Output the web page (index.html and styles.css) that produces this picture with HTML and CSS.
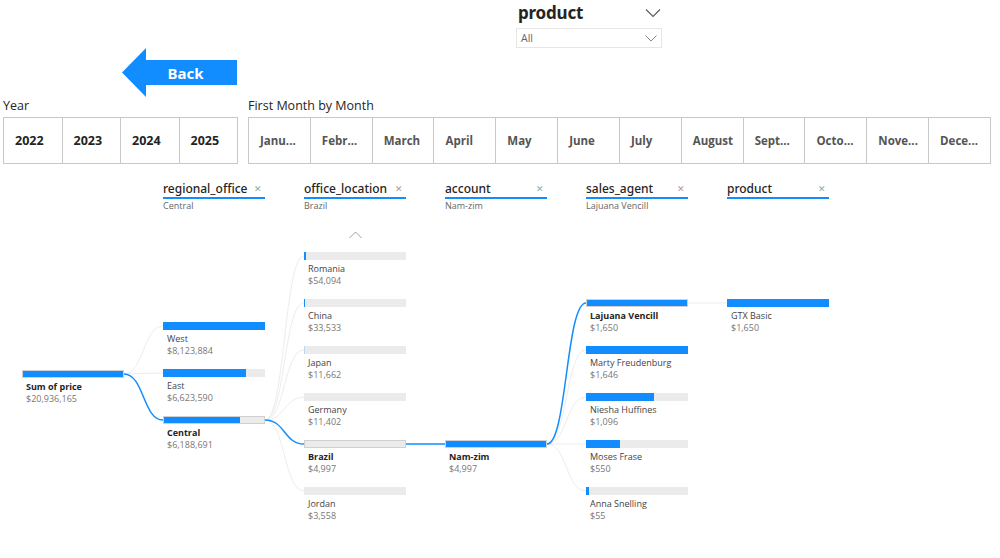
FILE: index.html
```html
<!DOCTYPE html>
<html lang="en">
<head>
<meta charset="UTF-8">
<meta name="viewport" content="width=device-width, initial-scale=1.0">
<title>Sales Decomposition</title>
<link rel="stylesheet" href="styles.css">
</head>
<body>
<div class="page">
    <!-- connectors between tree nodes, drawn over the whole canvas -->
    <svg class="links" width="1000" height="558" viewBox="0 0 1000 558">
        <path class="link" d="M124,374 C144,374 143,326 163,326"/>
        <path class="link" d="M124,374 L163,373"/>
        <path class="link" d="M265,420 C285,420 284,256 304,256"/>
        <path class="link" d="M265,420 C285,420 284,303 304,303"/>
        <path class="link" d="M265,420 C285,420 284,350 304,350"/>
        <path class="link" d="M265,420 C285,420 284,397 304,397"/>
        <path class="link" d="M265,420 C285,420 284,491 304,491"/>
        <path class="link" d="M547,444 C567,444 566,350 586,350"/>
        <path class="link" d="M547,444 C567,444 566,397 586,397"/>
        <path class="link" d="M547,444 L586,444"/>
        <path class="link" d="M547,444 C567,444 566,491 586,491"/>
        <path class="link" d="M688,303 L727,303"/>
        <path class="link active" d="M124,374 C144,374 143,420 163,420"/>
        <path class="link active" d="M265,420 C285,420 284,444 304,444"/>
        <path class="link active" d="M406,444 L445,444"/>
        <path class="link active" d="M547,444 C567,444 566,303 586,303"/>
    </svg>

    <div class="top">
        <div class="product-slicer">
            <div class="ps-head">
                <span class="ps-title">product</span>
                <svg class="chev" width="16" height="10" viewBox="0 0 16 10"><path d="M1,1.5 L8,8.5 L15,1.5"/></svg>
            </div>
            <div class="ps-drop">
                <span>All</span>
                <svg class="chev small" width="12" height="7" viewBox="0 0 12 7"><path d="M0.5,0.5 L6,6 L11.5,0.5"/></svg>
            </div>
        </div>
        <div class="back-btn">
            <svg class="back-arrow" width="115" height="49" viewBox="0 0 115 49">
                <polygon points="0,24.5 24,0 24,12 115,12 115,37 24,37 24,49"/>
            </svg>
            <span>Back</span>
        </div>
    </div>

    <div class="slicers">
        <div class="slicer year">
            <div class="slicer-label">Year</div>
            <div class="tiles">
                <div class="tile">2022</div>
                <div class="tile">2023</div>
                <div class="tile">2024</div>
                <div class="tile">2025</div>
            </div>
        </div>
        <div class="slicer month">
            <div class="slicer-label">First Month by Month</div>
            <div class="tiles">
                <div class="tile">Janu...</div>
                <div class="tile">Febr...</div>
                <div class="tile">March</div>
                <div class="tile">April</div>
                <div class="tile">May</div>
                <div class="tile">June</div>
                <div class="tile">July</div>
                <div class="tile">August</div>
                <div class="tile">Sept...</div>
                <div class="tile">Octo...</div>
                <div class="tile">Nove...</div>
                <div class="tile">Dece...</div>
            </div>
        </div>
    </div>

    <div class="tree">
        <div class="col">
            <div class="col-head blank"></div>
            <div class="nodes nodes-root">
                <div class="node selected">
                    <div class="bar"><div class="fill" style="width:100%"></div></div>
                    <div class="name">Sum of price</div>
                    <div class="value">$20,936,165</div>
                </div>
            </div>
        </div>

        <div class="col">
            <div class="col-head">
                <div class="head-row"><span>regional_office</span><span class="close">&#x2715;</span></div>
                <div class="head-sub">Central</div>
            </div>
            <div class="nodes nodes-region">
                <div class="node">
                    <div class="bar"><div class="fill" style="width:100%"></div></div>
                    <div class="name">West</div>
                    <div class="value">$8,123,884</div>
                </div>
                <div class="node">
                    <div class="bar"><div class="fill" style="width:81.5%"></div></div>
                    <div class="name">East</div>
                    <div class="value">$6,623,590</div>
                </div>
                <div class="node selected">
                    <div class="bar"><div class="fill" style="width:76%"></div></div>
                    <div class="name">Central</div>
                    <div class="value">$6,188,691</div>
                </div>
            </div>
        </div>

        <div class="col">
            <div class="col-head">
                <div class="head-row"><span>office_location</span><span class="close">&#x2715;</span></div>
                <div class="head-sub">Brazil</div>
            </div>
            <div class="nodes nodes-location">
                <div class="scroll-up">
                    <svg class="chev" width="13" height="8" viewBox="0 0 13 8"><path d="M0.5,7 L6.5,1 L12.5,7"/></svg>
                </div>
                <div class="node">
                    <div class="bar"><div class="fill" style="width:2%"></div></div>
                    <div class="name">Romania</div>
                    <div class="value">$54,094</div>
                </div>
                <div class="node">
                    <div class="bar"><div class="fill" style="width:1.2%"></div></div>
                    <div class="name">China</div>
                    <div class="value">$33,533</div>
                </div>
                <div class="node">
                    <div class="bar"><div class="fill faint" style="width:0.6%"></div></div>
                    <div class="name">Japan</div>
                    <div class="value">$11,662</div>
                </div>
                <div class="node">
                    <div class="bar"><div class="fill" style="width:0%"></div></div>
                    <div class="name">Germany</div>
                    <div class="value">$11,402</div>
                </div>
                <div class="node selected">
                    <div class="bar"><div class="fill" style="width:0%"></div></div>
                    <div class="name">Brazil</div>
                    <div class="value">$4,997</div>
                </div>
                <div class="node">
                    <div class="bar"><div class="fill" style="width:0%"></div></div>
                    <div class="name">Jordan</div>
                    <div class="value">$3,558</div>
                </div>
            </div>
        </div>

        <div class="col">
            <div class="col-head">
                <div class="head-row"><span>account</span><span class="close">&#x2715;</span></div>
                <div class="head-sub">Nam-zim</div>
            </div>
            <div class="nodes nodes-account">
                <div class="node selected">
                    <div class="bar"><div class="fill" style="width:100%"></div></div>
                    <div class="name">Nam-zim</div>
                    <div class="value">$4,997</div>
                </div>
            </div>
        </div>

        <div class="col">
            <div class="col-head">
                <div class="head-row"><span>sales_agent</span><span class="close">&#x2715;</span></div>
                <div class="head-sub">Lajuana Vencill</div>
            </div>
            <div class="nodes nodes-agent">
                <div class="node selected">
                    <div class="bar"><div class="fill" style="width:100%"></div></div>
                    <div class="name">Lajuana Vencill</div>
                    <div class="value">$1,650</div>
                </div>
                <div class="node">
                    <div class="bar"><div class="fill" style="width:99.8%"></div></div>
                    <div class="name">Marty Freudenburg</div>
                    <div class="value">$1,646</div>
                </div>
                <div class="node">
                    <div class="bar"><div class="fill" style="width:66.4%"></div></div>
                    <div class="name">Niesha Huffines</div>
                    <div class="value">$1,096</div>
                </div>
                <div class="node">
                    <div class="bar"><div class="fill" style="width:33.3%"></div></div>
                    <div class="name">Moses Frase</div>
                    <div class="value">$550</div>
                </div>
                <div class="node">
                    <div class="bar"><div class="fill" style="width:3.3%"></div></div>
                    <div class="name">Anna Snelling</div>
                    <div class="value">$55</div>
                </div>
            </div>
        </div>

        <div class="col">
            <div class="col-head">
                <div class="head-row"><span>product</span><span class="close">&#x2715;</span></div>
                <div class="head-sub"></div>
            </div>
            <div class="nodes nodes-product">
                <div class="node">
                    <div class="bar"><div class="fill" style="width:100%"></div></div>
                    <div class="name">GTX Basic</div>
                    <div class="value">$1,650</div>
                </div>
            </div>
        </div>
    </div>
</div>
</body>
</html>
```

FILE: styles.css
```css
body {
    margin: 0;
    padding: 0;
    background-color: #ffffff;
    font-family: 'Open Sans', 'Noto Sans', sans-serif;
    color: #252423;
}

.page {
    position: relative;
    width: 1000px;
    height: 558px;
    overflow: hidden;
}

.links {
    position: absolute;
    top: 0;
    left: 0;
    pointer-events: none;
}

.link {
    fill: none;
    stroke: #ededed;
    stroke-width: 1;
}

.link.active {
    stroke: #118dff;
    stroke-width: 1.5;
}

/* top area: product slicer + back button */
.top {
    height: 97px;
}

.product-slicer {
    margin-left: 516px;
    width: 146px;
    height: 48px;
}

.ps-head {
    height: 26px;
    display: flex;
    align-items: center;
    justify-content: space-between;
    padding-left: 2px;
    padding-right: 1px;
}

.ps-title {
    font-family: 'Noto Sans', sans-serif;
    font-weight: 700;
    font-size: 17px;
    letter-spacing: -0.2px;
    line-height: 22px;
    color: #252423;
}

.chev path {
    fill: none;
    stroke: #605e5c;
    stroke-width: 1.2;
}

.ps-drop {
    height: 18px;
    margin-top: 2px;
    border: 1px solid #e6e6e6;
    display: flex;
    align-items: center;
    justify-content: space-between;
    padding: 0 4px 0 4px;
}

.ps-drop span {
    font-size: 10.5px;
    color: #666;
}

.chev.small path {
    stroke: #8a8886;
    stroke-width: 1;
}

.back-btn {
    position: relative;
    margin-left: 122px;
    width: 115px;
    height: 49px;
}

.back-arrow {
    display: block;
}

.back-arrow polygon {
    fill: #118dff;
}

.back-btn span {
    position: absolute;
    left: 12px;
    right: 0;
    top: 13px;
    height: 25px;
    line-height: 25px;
    text-align: center;
    color: #fff;
    font-family: 'Noto Sans', sans-serif;
    font-weight: 700;
    font-size: 15px;
}

/* tile slicers */
.slicers {
    display: flex;
    gap: 10px;
    padding-left: 3px;
}

.slicer-label {
    height: 20px;
    line-height: 18px;
    font-size: 12.5px;
    color: #252423;
}

.tiles {
    display: flex;
    height: 47px;
    border: 1px solid #c8c8c8;
    box-sizing: border-box;
}

.year .tiles {
    width: 235px;
}

.month .tiles {
    width: 743px;
}

.tile {
    flex: 1;
    display: flex;
    align-items: center;
    padding-left: 11px;
    border-left: 1px solid #c8c8c8;
    font-weight: 700;
    white-space: nowrap;
}

.tile:first-child {
    border-left: none;
}

.year .tile {
    font-size: 12.5px;
    color: #252423;
}

.month .tile {
    font-size: 11.5px;
    color: #555;
}

/* decomposition tree */
.tree {
    position: relative;
    display: flex;
    gap: 39px;
    padding-left: 22px;
    padding-top: 17px;
}

.col {
    width: 102px;
}

.col-head {
    height: 31px;
}

.head-row {
    display: flex;
    justify-content: space-between;
    align-items: center;
    height: 16px;
    line-height: 16px;
    font-family: 'Noto Sans', sans-serif;
    font-size: 12px;
    font-weight: 500;
    color: #252423;
    border-bottom: 2px solid #118dff;
}

.close {
    font-size: 9px;
    color: #a19f9d;
    padding-right: 3px;
}

.head-sub {
    margin-top: 1px;
    height: 12px;
    line-height: 12px;
    font-size: 9px;
    color: #666;
}

.nodes-root { margin-top: 158px; }
.nodes-region { margin-top: 110px; }
.nodes-location { margin-top: 12px; }
.nodes-account { margin-top: 228px; }
.nodes-agent { margin-top: 87px; }
.nodes-product { margin-top: 87px; }

.scroll-up {
    height: 28px;
    padding-top: 7px;
    box-sizing: border-box;
    text-align: center;
}

.scroll-up .chev {
    display: inline-block;
    vertical-align: top;
}

.scroll-up .chev path {
    stroke: #a19f9d;
    stroke-width: 1;
}

.node {
    height: 47px;
}

.bar {
    height: 8px;
    background-color: #ebebeb;
    box-sizing: border-box;
    overflow: hidden;
}

.node.selected .bar {
    border: 1px solid #d0d0d0;
}

.fill {
    height: 100%;
    background-color: #118dff;
}

.fill.faint {
    background-color: #b9d9f7;
}

.name,
.value {
    padding-left: 4px;
    height: 12px;
    line-height: 12px;
    font-size: 9px;
    white-space: nowrap;
}

.name {
    margin-top: 3px;
    color: #444;
}

.node.selected .name {
    font-weight: 700;
    color: #252423;
}

.value {
    color: #777;
}
```
